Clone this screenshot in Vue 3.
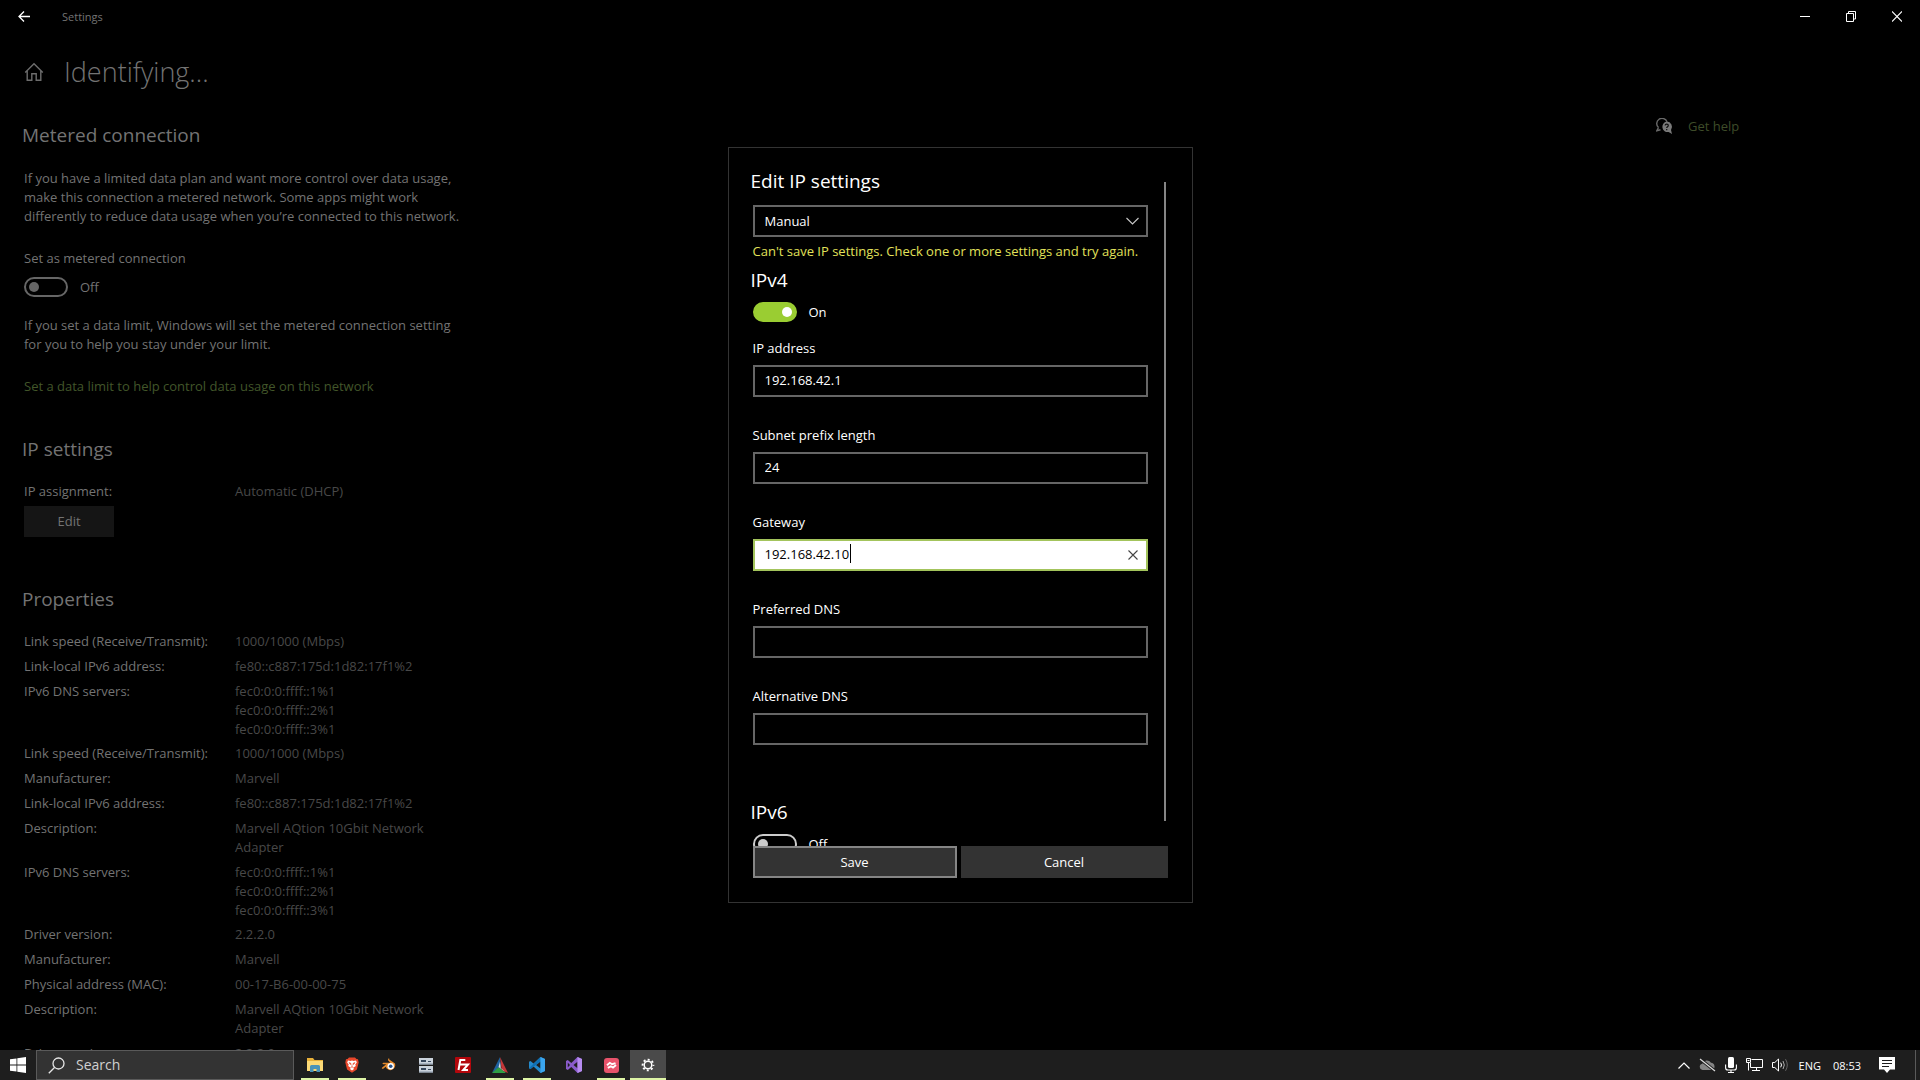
<script setup>
import { ref } from 'vue'

const metered = ref(false)
const ipv4 = ref(true)
const ipv6 = ref(false)
const mode = ref('Manual')

const fields = ref([
  { id: 'ip-address', label: 'IP address', value: '192.168.42.1' },
  { id: 'prefix-length', label: 'Subnet prefix length', value: '24' },
  { id: 'gateway', label: 'Gateway', value: '192.168.42.10', active: true },
  { id: 'preferred-dns', label: 'Preferred DNS', value: '' },
  { id: 'alternative-dns', label: 'Alternative DNS', value: '' },
])

const dns = ['fec0:0:0:ffff::1%1', 'fec0:0:0:ffff::2%1', 'fec0:0:0:ffff::3%1']
const properties = [
  ['Link speed (Receive/Transmit):', ['1000/1000 (Mbps)']],
  ['Link-local IPv6 address:', ['fe80::c887:175d:1d82:17f1%2']],
  ['IPv6 DNS servers:', dns],
  ['Link speed (Receive/Transmit):', ['1000/1000 (Mbps)']],
  ['Manufacturer:', ['Marvell']],
  ['Link-local IPv6 address:', ['fe80::c887:175d:1d82:17f1%2']],
  ['Description:', ['Marvell AQtion 10Gbit Network Adapter']],
  ['IPv6 DNS servers:', dns],
  ['Driver version:', ['2.2.2.0']],
  ['Manufacturer:', ['Marvell']],
  ['Physical address (MAC):', ['00-17-B6-00-00-75']],
  ['Description:', ['Marvell AQtion 10Gbit Network Adapter']],
  ['Driver version:', ['2.2.2.0']],
]
</script>

<template>
  <div class="desktop">
    <div class="window">
      <header class="titlebar">
        <button class="back" aria-label="Back">
          <svg width="12" height="11" viewBox="0 0 12 11" fill="none" stroke="#fff" stroke-width="1.3"><path d="M12 5.5H1M6 .5L1 5.5l5 5" /></svg>
        </button>
        <span class="app-name">Settings</span>
        <div class="caption">
          <button aria-label="Minimize"><svg width="10" height="11" viewBox="0 0 10 11" stroke="#fff"><path d="M0 5.5h10" /></svg></button>
          <button aria-label="Restore"><svg width="10" height="11" viewBox="0 0 10 11" fill="none" stroke="#fff"><path d="M.5 2.5h7v8h-7zM2.500 2.500V.5h7V8H7.500" /></svg></button>
          <button aria-label="Close"><svg width="10" height="11" viewBox="0 0 10 11" stroke="#fff" stroke-width="1.1"><path d="M0 .5l10 10M10 .5l-10 10" /></svg></button>
        </div>
      </header>

      <div class="body">
        <main class="page">
          <div class="page-title">
            <svg width="20" height="20" viewBox="0 0 20 20" fill="none" stroke="#6d6d6d" stroke-width="1.4"><path d="M1.200 10.400L10 1.700l8.800 8.700M3.200 8.700v9.600h4.600v-6.600h4.400v6.600h4.600V8.700" /></svg>
            <h1>Identifying...</h1>
          </div>

          <h2>Metered connection</h2>
          <p class="intro">If you have a limited data plan and want more control over data usage,<br />make this connection a metered network. Some apps might work<br />differently to reduce data usage when you’re connected to this network.</p>
          <label class="caption-label" for="metered">Set as metered connection</label>
          <div class="toggle-row">
            <input id="metered" v-model="metered" class="toggle" type="checkbox" role="switch" />
            <span>{{ metered ? 'On' : 'Off' }}</span>
          </div>
          <p class="limit">If you set a data limit, Windows will set the metered connection setting<br />for you to help you stay under your limit.</p>
          <a class="link" href="#">Set a data limit to help control data usage on this network</a>

          <h2 class="section">IP settings</h2>
          <dl>
            <dt>IP assignment:</dt>
            <dd>Automatic (DHCP)</dd>
          </dl>
          <button class="edit">Edit</button>

          <h2 class="section">Properties</h2>
          <dl>
            <template v-for="(row, i) in properties" :key="i">
              <dt>{{ row[0] }}</dt>
              <dd :class="{ servers: row[1].length > 1 }"><div v-for="v in row[1]" :key="v">{{ v }}</div></dd>
            </template>
          </dl>
        </main>

        <aside class="help">
          <svg width="17" height="17" viewBox="0 0 17 17">
            <path d="M2.500 9.600A5.300 5.300 0 1 1 11 3.800M2.500 9.500L.8 12.800l3.700-1" fill="none" stroke="#6a6a6a" stroke-width="1.400" />
            <path d="M10.700 3.600a5.200 5.200 0 0 1 4.300 8.300l1 4-3.400-1.900a5.200 5.200 0 1 1-1.900-10.400z" fill="#7a7a7a" />
            <path d="M9.100 7.500c.1-2 3.300-1.900 3.200.1 0 1.300-1.600 1.200-1.600 2.500M10.700 11v1.200" fill="none" stroke="#111" stroke-width="1.200" />
          </svg>
          <a href="#">Get help</a>
        </aside>
      </div>

      <div class="overlay">
        <section class="dialog" role="dialog" aria-labelledby="dialog-title">
          <div class="scroller">
            <form id="ip-form" class="form" @submit.prevent>
              <h2 id="dialog-title">Edit IP settings</h2>
              <div class="control">
                <select v-model="mode" aria-label="IP assignment">
                  <option>Manual</option>
                  <option>Automatic (DHCP)</option>
                </select>
                <svg class="chevron" width="13" height="8" viewBox="0 0 13 8" fill="none" stroke="#c8c8c8" stroke-width="1.100"><path d="M.5 1l6 6 6-6" /></svg>
              </div>
              <p class="error">Can't save IP settings. Check one or more settings and try again.</p>
              <h2><label for="ipv4">IPv4</label></h2>
              <div class="toggle-row">
                <input id="ipv4" v-model="ipv4" class="toggle" type="checkbox" role="switch" />
                <span>{{ ipv4 ? 'On' : 'Off' }}</span>
              </div>
              <div v-for="f in fields" :key="f.id" class="field">
                <label :for="f.id">{{ f.label }}</label>
                <div class="control" :class="{ active: f.active }">
                  <input :id="f.id" v-model="f.value" type="text" />
                  <template v-if="f.active">
                    <span class="caret"></span>
                    <button class="clear" type="button" aria-label="Clear" @click="f.value = ''">
                      <svg width="10" height="10" viewBox="0 0 10 10" stroke="#444" stroke-width="1.100"><path d="M.5.5l9 9M9.500.5l-9 9" /></svg>
                    </button>
                  </template>
                </div>
              </div>
              <h2 class="ipv6"><label for="ipv6">IPv6</label></h2>
              <div class="toggle-row">
                <input id="ipv6" v-model="ipv6" class="toggle" type="checkbox" role="switch" />
                <span>{{ ipv6 ? 'On' : 'Off' }}</span>
              </div>
            </form>
            <div class="thumb"></div>
          </div>
          <div class="actions">
            <button class="save" type="submit" form="ip-form">Save</button>
            <button type="button">Cancel</button>
          </div>
        </section>
      </div>
    </div>

    <footer class="taskbar">
      <button class="start" aria-label="Start">
        <svg width="16" height="16" viewBox="0 0 16 16" fill="#fff"><path d="M0 2.300L6.500 1.400v6.200H0zM7.300 1.300L16 0v7.600H7.300zM0 8.400h6.500v6.200L0 13.700zM7.300 8.400H16V16l-8.700-1.300z" /></svg>
      </button>
      <label class="search">
        <svg width="17" height="17" viewBox="0 0 17 17" fill="none" stroke="#e6e6e6" stroke-width="1.300"><circle cx="10.500" cy="6.500" r="5.500" /><path d="M6.500 10.500L.8 16.200" /></svg>
        <input type="text" placeholder="Search" aria-label="Search" />
      </label>

      <nav class="apps">
        <button class="open" aria-label="File Explorer">
          <svg width="18" height="16" viewBox="0 0 18 16"><path d="M1 1h6l1.500 2H17v11H1z" fill="#e8b13a" /><path d="M1 4h16v10H1z" fill="#fbd976" /><path d="M4 15V9.500Q4 8 5.500 8h7Q14 8 14 9.500V15h-3.500v-3h-3v3z" fill="#4a93b8" /></svg>
        </button>
        <button class="open" aria-label="Brave">
          <svg width="14" height="16" viewBox="0 0 14 16"><path d="M4 .5h6l1.500 1.500 1.500.3.7 3.200-1.800 7L7 15.800 2.100 12.500.3 5.500 1 2.300 2.500 2z" fill="#e8472b" /><path d="M3 3.500l2.500.5L7 3.500 8.500 4l2.500-.5.8 2-1.500 2 .5 1.500-2.600 1.800L9 12l-2 1.500L5 12l.8-1.200L3.200 9l.5-1.500-1.500-2z" fill="#fff" /><path d="M4 5.600l2 .8-.5 1.200zM10 5.600l-2 .8.500 1.200zM7 7v2.500M5.800 10.300L7 9.700l1.200.6" fill="#e8472b" stroke="#e8472b" stroke-width=".6" /></svg>
        </button>
        <button aria-label="Blender">
          <svg width="16" height="14" viewBox="0 0 16 14"><path d="M7.200.8c.7-.6 1.500.1 1 .6L14 5.600a4.900 4.900 0 1 1-9.300 3.200L2.200 10.700c-1 .6-1.900-.5-1-1.200l4-3.200H2.300c-1 0-1-1.500 0-1.500h7.100L7 2.200z" fill="#e58a2c" /><circle cx="9.700" cy="8.200" r="3.200" fill="#fff" /><circle cx="9.700" cy="8.200" r="1.800" fill="#28528a" /></svg>
        </button>
        <button aria-label="Server Manager">
          <svg width="14" height="15" viewBox="0 0 14 15"><path d="M0 0h14v6.500H0zM0 8h14v6.500H0z" fill="#cbd3dc" /><path d="M2 2h5v2H2zM2 10h5v2H2z" fill="#37475c" /><path d="M9 3h3v1H9zM9 11h3v1H9z" fill="#37475c" /><path d="M0 5.500h14v1H0zM0 13.500h14v1H0z" fill="#8693a3" /></svg>
        </button>
        <button aria-label="FileZilla">
          <svg width="16" height="16" viewBox="0 0 16 16"><rect width="16" height="16" rx="1" fill="#b3070c" /><path d="M3.500 13L5.300 3h5M4.500 7.500h4.500M8 7.500h5L8.200 13H13" fill="none" stroke="#fff" stroke-width="2" /></svg>
        </button>
        <button class="open" aria-label="CMake">
          <svg width="16" height="16" viewBox="0 0 16 16"><path d="M8 0l.8 9.200L0 16z" fill="#1f62a0" /><path d="M8 0l8 16-6.200-2.500z" fill="#c53738" /><path d="M0 16l6.500-5.700L14 16z" fill="#2f9f45" /><path d="M8 4.500l.8 6.600-2.300-.8zM8.800 11l4.500 4L7 10.500z" fill="#d9dfe3" /></svg>
        </button>
        <button class="open" aria-label="Visual Studio Code">
          <svg width="16" height="16" viewBox="0 0 16 16"><path d="M11.500 0L16 2v12l-4.500 2-7-6.500L1.500 12 0 11.200V4.800L1.500 4l3 2.500zM11.500 4.500L7 8l4.500 3.500z" fill="#2489ca" fill-rule="evenodd" /><path d="M0 11.200L11.500 0v4.500L1.500 12z" fill="#1070b3" /><path d="M11.500 0L16 2v12l-4.500 2z" fill="#3aa5ee" /></svg>
        </button>
        <button aria-label="Visual Studio">
          <svg width="16" height="16" viewBox="0 0 16 16"><path d="M0 4l1.800-1 3.500 3L11.500 0 16 2v12l-4.500 2-6.200-6-3.500 3L0 12zM1.800 5.800v4.400L4 8zM11.500 4.800L7.500 8l4 3.200z" fill="#8a5bcb" fill-rule="evenodd" /><path d="M11.500 0L16 2v12l-4.500 2z" fill="#b78cf0" /></svg>
        </button>
        <button class="open" aria-label="Notes">
          <svg width="15" height="15" viewBox="0 0 15 15"><rect width="15" height="15" rx="3" fill="#e8536b" /><path d="M3 7.300L5.800 4.800l2.400 1.400 3.300-1M3.800 9.800l3-1.500L9 9.600l3-2.600" fill="none" stroke="#fff" stroke-width="1.900" /></svg>
        </button>
        <button class="open current" aria-label="Settings">
          <svg width="14" height="14" viewBox="0 0 14 14" fill="none" stroke="#fff"><circle cx="7" cy="7" r="3.800" stroke-width="1.500" /><circle cx="7" cy="7" r="5.400" stroke-width="1.900" stroke-dasharray="2 2.241" stroke-dashoffset="1" /></svg>
        </button>
      </nav>

      <div class="tray">
        <button aria-label="Show hidden icons"><svg width="12" height="7" viewBox="0 0 12 7" fill="none" stroke="#fff" stroke-width="1.200"><path d="M.5 6.500L6 1l5.500 5.500" /></svg></button>
        <button aria-label="OneDrive"><svg width="17" height="14" viewBox="0 0 17 14"><path d="M3.500 12A3.200 3.200 0 0 1 3.300 5.700 4.800 4.800 0 0 1 12 4.800 3.700 3.700 0 0 1 13 12z" fill="#858585" /><path d="M1 1l15 12" stroke="#1e1e1e" stroke-width="3" /><path d="M1 1l15 12" stroke="#ddd" stroke-width="1.200" /></svg></button>
        <button aria-label="Microphone"><svg width="12" height="16" viewBox="0 0 12 16"><rect x="3" width="6" height="11" rx="1.500" fill="#fff" /><path d="M.6 7.500v3.200q0 2.300 2.400 2.300h6q2.400 0 2.400-2.300V7.500M6 13v2.500M3 15.500h6" fill="none" stroke="#fff" stroke-width="1.100" /></svg></button>
        <button aria-label="Network"><svg width="17" height="14" viewBox="0 0 17 14" fill="none" stroke="#fff"><path d="M5.500 1.500h11v8h-12V5M10.500 9.500v3M6 12.500h8M.5.5h4v4h-4zM2.500 4.500v8M1.500 2.500h2" /></svg></button>
        <button aria-label="Volume"><svg width="17" height="14" viewBox="0 0 17 14" fill="none" stroke="#fff"><path d="M.5 4.500h2.300L6.500 1v12L2.800 9.500H.5z" /><path d="M8.700 4.700q1.600 2.300 0 4.600" /><path d="M11 3q2.600 4 0 8" stroke="#aaa" /><path d="M13.500 1.200q3.600 5.800 0 11.600" stroke="#666" /></svg></button>
        <button class="lang">ENG</button>
        <time>08:53</time>
        <button class="notes" aria-label="Notifications"><svg width="16" height="16" viewBox="0 0 16 16"><path d="M0 0h16v12.500h-5L8 16l-3-3.500H0z" fill="#fff" /><path d="M3 3.500h10M3 6.500h10M3 9.500h7" stroke="#1e1e1e" /></svg></button>
        <button class="peek" aria-label="Show desktop"></button>
      </div>
    </footer>
  </div>
</template>

<style>
html,
body {
  margin: 0;
  background: #000;
}
</style>

<style scoped>
.desktop {
  --text: #737373;
  --muted: #484848;
  display: flex;
  flex-direction: column;
  height: 100vh;
  overflow: hidden;
  background: #000;
  color: var(--text);
  font: 13px/19px "Open Sans", "Noto Sans", sans-serif;
}
.desktop * {
  box-sizing: border-box;
}
svg {
  display: block;
  flex: none;
}
button {
  display: flex;
  align-items: center;
  justify-content: center;
  padding: 0;
  border: 0;
  background: none;
  color: inherit;
  font: inherit;
}
h1,
h2,
p,
dl,
dd {
  margin: 0;
}
a {
  text-decoration: none;
}
.window {
  position: relative;
  display: flex;
  flex: 1;
  flex-direction: column;
  min-height: 0;
  overflow: hidden;
}
.titlebar {
  display: flex;
  align-items: center;
  flex: none;
  height: 32px;
}
.back {
  width: 48px;
  height: 32px;
}
.app-name {
  flex: 1;
  margin-left: 14px;
  font-size: 11px;
}
.caption {
  display: flex;
}
.caption button {
  width: 46px;
  height: 32px;
}
.body {
  display: flex;
  flex: 1;
  justify-content: space-between;
  min-height: 0;
}
.page {
  padding: 20px 24px 0;
}
.page-title {
  display: flex;
  align-items: center;
  gap: 20px;
  height: 40px;
}
h1 {
  font-size: 27px;
  font-weight: 300;
  line-height: 40px;
}
h2 {
  margin-left: -2px;
  font-size: 19px;
  font-weight: 400;
  line-height: 26px;
}
.page > h2 {
  margin-top: 30px;
}
.intro {
  margin-top: 21px;
}
.caption-label {
  display: block;
  margin-top: 23px;
}
.toggle-row {
  display: flex;
  align-items: center;
  gap: 12px;
  height: 20px;
  margin-top: 9px;
}
.toggle {
  display: flex;
  align-items: center;
  width: 44px;
  height: 20px;
  margin: 0;
  padding: 0 3px;
  border: 2px solid #666;
  border-radius: 10px;
  appearance: none;
}
.toggle::before {
  width: 10px;
  height: 10px;
  border-radius: 50%;
  background: #666;
  content: "";
}
.limit {
  margin-top: 19px;
}
.link {
  display: block;
  margin-top: 23px;
  color: #42562a;
}
.page > .section {
  margin-top: 40px;
}
dl {
  display: grid;
  grid-template-columns: 211px 210px;
  row-gap: 6px;
  margin-top: 20px;
}
dd {
  color: var(--muted);
}
.servers {
  margin-bottom: -1px;
}
.edit {
  width: 90px;
  height: 31px;
  margin-top: 5px;
  background: #151515;
}
.page > .edit + .section {
  margin-top: 49px;
}
.help {
  display: flex;
  gap: 15px;
  align-items: center;
  width: 264px;
  height: 20px;
  margin-top: 84px;
}
.help a {
  color: #3e4c29;
}

.overlay {
  position: absolute;
  inset: 0;
  display: flex;
  align-items: center;
  justify-content: center;
  color: #fff;
}
.dialog {
  display: flex;
  flex-direction: column;
  width: 465px;
  height: 756px;
  max-height: 100%;
  padding: 20px 24px 24px;
  border: 1px solid #333;
  background: #000;
}
.scroller {
  display: flex;
  flex: 1;
  gap: 16px;
  min-height: 0;
  margin-left: -4px;
  padding: 0 2px 0 4px;
  overflow: hidden;
}
.form {
  flex: 1;
}
.thumb {
  width: 2px;
  margin: 14px 0 25px;
  background: #858585;
}
.control {
  position: relative;
}
.control select,
.control input {
  display: block;
  width: 100%;
  height: 32px;
  padding: 0 10px;
  border: 2px solid #666;
  border-radius: 0;
  outline: 0;
  background: #000;
  color: #fff;
  font: inherit;
  appearance: none;
}
.control input {
  padding-bottom: 2px;
}
.dialog h2 + .control {
  margin-top: 11px;
}
.chevron {
  position: absolute;
  top: 12px;
  right: 9px;
  pointer-events: none;
}
.error {
  margin: 5px 0 6px;
  color: #e2e25a;
  white-space: nowrap;
}
.dialog .toggle {
  border-color: #ccc;
}
.dialog .toggle::before {
  background: #ccc;
}
.dialog .toggle:checked {
  justify-content: flex-end;
  border-color: #9acd32;
  background: #9acd32;
}
.dialog .toggle:checked::before {
  background: #fff;
}
.field {
  height: 87px;
  padding-top: 17px;
}
.field label {
  display: block;
  margin-bottom: 7px;
}
.active input {
  border-color: #a3c45c;
  background: #fff;
  color: #000;
}
.caret {
  position: absolute;
  top: 5px;
  left: 97px;
  width: 1px;
  height: 19px;
  background: #000;
}
.clear {
  position: absolute;
  top: 2px;
  right: 2px;
  width: 26px;
  height: 28px;
}
.ipv6 {
  margin-top: 42px;
}
.actions {
  display: flex;
  gap: 4px;
}
.actions button {
  flex: 1;
  height: 32px;
  background: #333;
}
.actions .save {
  flex: none;
  width: 204px;
  border: 2px solid #858585;
}

.taskbar {
  display: flex;
  flex: none;
  height: 30px;
  background: #1e1e1e;
  color: #fff;
}
.start {
  width: 36px;
}
.search {
  display: flex;
  align-items: center;
  gap: 11px;
  width: 258px;
  padding: 0 11px;
  border: 1px solid #5a5a5a;
  background: #333;
}
.search input {
  width: 160px;
  padding: 0;
  border: 0;
  outline: 0;
  background: none;
  color: #fff;
  font: 14px/20px "Open Sans", "Noto Sans", sans-serif;
}
.search input::placeholder {
  color: #d0d0d0;
  opacity: 1;
}
.apps {
  display: flex;
  flex: 1;
  gap: 1px;
  margin-left: 3px;
}
.apps button {
  position: relative;
  width: 36px;
}
.apps .open::after {
  position: absolute;
  right: 4px;
  bottom: 0;
  left: 4px;
  height: 2px;
  background: #def5a6;
  content: "";
}
.apps .current {
  background: #4a4a4a;
}
.apps .current::after {
  right: 0;
  left: 0;
}
.tray {
  display: flex;
  align-items: center;
  gap: 9px;
  font-size: 11px;
}
.tray button {
  height: 30px;
}
.tray .lang {
  margin-left: 1px;
}
.tray time {
  margin-left: 3px;
}
.tray .notes {
  margin-left: 9px;
}
.tray .peek {
  width: 5px;
  margin-left: 11px;
  border-left: 1px solid #5a5a5a;
}
</style>
